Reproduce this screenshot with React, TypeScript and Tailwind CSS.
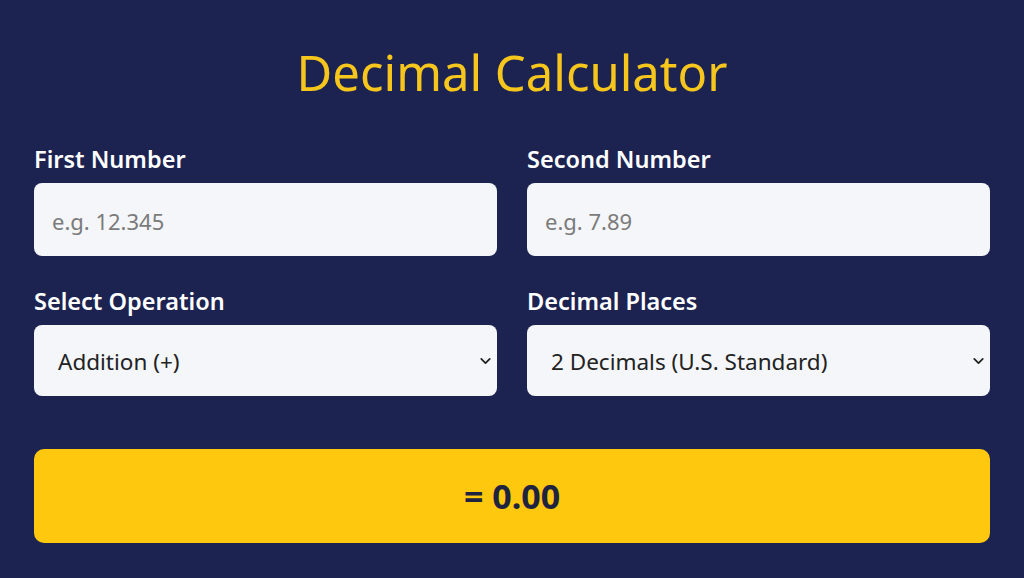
import { ChevronDown } from "lucide-react";

const font = { fontFamily: '"Noto Sans", "Open Sans", Arial, sans-serif' };

function Field({ label, placeholder }: { label: string; placeholder: string }) {
  return (
    <div className="flex flex-col">
      <label className="mb-[10px] text-[23.5px] font-semibold leading-[28px] text-white">{label}</label>
      <input
        type="text"
        placeholder={placeholder}
        className="h-[73px] rounded-[8px] bg-[#f4f6f9] px-[18px] pt-[3px] text-[22px] text-[#222] outline-none placeholder:text-[#7b7b7b]"
      />
    </div>
  );
}

function SelectField({ label, value, options }: { label: string; value: string; options: string[] }) {
  return (
    <div className="flex flex-col">
      <label className="mb-[10px] text-[23.5px] font-semibold leading-[28px] text-white">{label}</label>
      <div className="relative">
        <select
          defaultValue={value}
          className="h-[71px] w-full appearance-none rounded-[8px] bg-[#f4f6f9] px-[24px] pt-[3px] text-[22.5px] text-[#222] outline-none"
        >
          {options.map((o) => (
            <option key={o}>{o}</option>
          ))}
        </select>
        <ChevronDown
          size={17}
          strokeWidth={2.5}
          className="pointer-events-none absolute right-[3px] top-1/2 -translate-y-1/2 text-[#222]"
        />
      </div>
    </div>
  );
}

export default function App() {
  return (
    <div className="min-h-[578px] bg-[#1d2351] px-[34px] pt-[40px]" style={font}>
      <h1 className="text-center text-[49px] font-normal leading-[64px] text-[#f7c61c]">Decimal Calculator</h1>
      <div className="mt-[41px] grid grid-cols-2 gap-x-[30px] gap-y-[31px]">
        <Field label="First Number" placeholder="e.g. 12.345" />
        <Field label="Second Number" placeholder="e.g. 7.89" />
        <SelectField
          label="Select Operation"
          value="Addition (+)"
          options={["Addition (+)", "Subtraction (−)", "Multiplication (×)", "Division (÷)"]}
        />
        <SelectField
          label="Decimal Places"
          value="2 Decimals (U.S. Standard)"
          options={["0 Decimals", "1 Decimal", "2 Decimals (U.S. Standard)", "3 Decimals", "4 Decimals"]}
        />
      </div>
      <button className="mt-[53px] flex h-[94px] w-full items-center justify-center rounded-[10px] bg-[#fec80f] text-[34px] font-bold text-[#1e2340]">
        = 0.00
      </button>
    </div>
  );
}
